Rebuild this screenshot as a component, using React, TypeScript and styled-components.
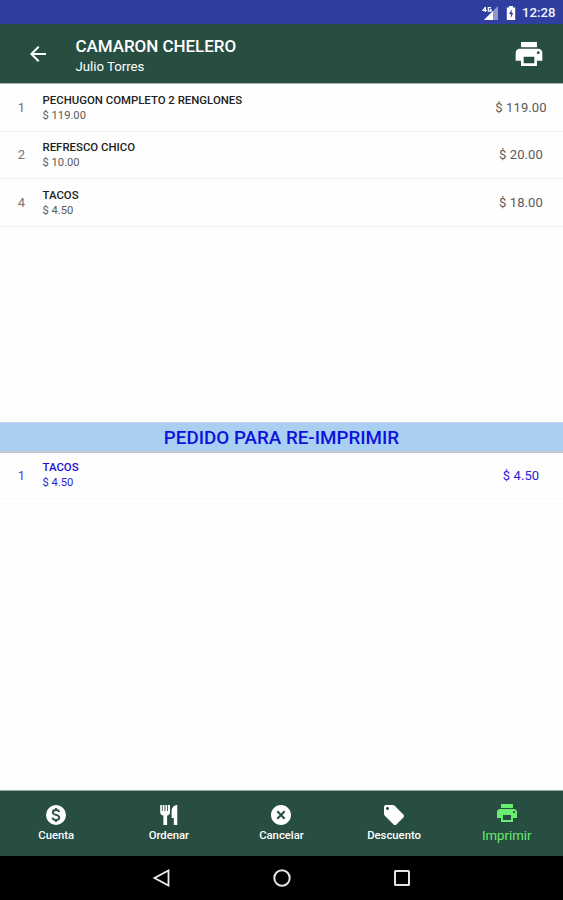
import React from 'react';
import styled, { createGlobalStyle } from 'styled-components';

const Global = createGlobalStyle`
  * { box-sizing: border-box; }
  body { margin: 0; background: #fff; font-family: Roboto, sans-serif; }
`;

const Screen = styled.div`
  width: 563px;
  height: 900px;
  display: flex;
  flex-direction: column;
  overflow: hidden;
  background: #fefefe;
`;

const StatusBar = styled.div`
  flex: 0 0 24px;
  display: flex;
  align-items: center;
  justify-content: flex-end;
  padding: 2px 7px 0 0;
  background: #303f9f;
  color: #f1f3fb;
`;

const BatterySlot = styled.span`
  display: flex;
  margin-left: 7px;
`;

const Clock = styled.span`
  width: 34px;
  margin-left: 6px;
  font-size: 13.2px;
  line-height: 16px;
  font-weight: 500;
  white-space: nowrap;
`;

const Header = styled.header`
  flex: 0 0 60px;
  display: flex;
  align-items: center;
  padding: 0 18px 0 26px;
  background: #284e42;
  border-bottom: 1px solid #a3b2ac;
  color: #fff;
`;

const Titles = styled.div`
  flex: 1;
  margin-left: 25.5px;
  padding-top: 4px;
`;

const Title = styled.div`
  font-size: 17px;
  line-height: 21px;
  font-weight: 500;
  letter-spacing: -0.05px;
`;

const Subtitle = styled.div`
  font-size: 13.2px;
  line-height: 19px;
`;

const List = styled.section<{ $height: number }>`
  flex: 0 0 ${p => p.$height}px;
`;

const Row = styled.div<{ $blue?: boolean }>`
  height: ${p => (p.$blue ? 46 : 47.5)}px;
  display: grid;
  grid-template-columns: 42px 1fr 84px;
  align-items: center;
  border-bottom: 1px solid ${p => (p.$blue ? '#f7f7f8' : '#efefef')};
  color: ${p => (p.$blue ? '#2a20d8' : '#5a5a5a')};
`;

const Quantity = styled.span`
  padding-left: 1px;
  text-align: center;
  font-size: 13px;
  opacity: 0.85;
`;

const Details = styled.div<{ $blue?: boolean }>`
  padding: ${p => (p.$blue ? 0 : 2)}px 0 0 0.5px;
`;

const ItemName = styled.div<{ $blue?: boolean }>`
  font-size: 11.4px;
  line-height: 15px;
  font-weight: 500;
  color: ${p => (p.$blue ? '#1c12d6' : '#222')};
`;

const UnitPrice = styled.div`
  font-size: 11.2px;
  line-height: 16px;
`;

const Amount = styled.span`
  text-align: center;
  font-size: 13px;
  letter-spacing: 0.1px;
`;

const Banner = styled.h2`
  flex: 0 0 31px;
  margin: 0;
  padding-top: 2px;
  border-top: 1px solid #c3d7ea;
  border-bottom: 2px solid #c5c9d2;
  background: #a9cff3;
  color: #0c13dc;
  text-align: center;
  font-size: 18.8px;
  line-height: 26px;
  font-weight: 500;
`;

const Tabs = styled.nav`
  flex: 0 0 66px;
  display: grid;
  grid-template-columns: repeat(5, 1fr);
  background: #284e42;
  border-top: 1px solid #93a59f;
`;

const Tab = styled.div<{ $active?: boolean }>`
  display: flex;
  flex-direction: column;
  align-items: center;
  padding-top: ${p => (p.$active ? 10 : 12)}px;
  color: ${p => (p.$active ? '#68ed71' : '#fff')};
  font-size: ${p => (p.$active ? 13.2 : 11.3)}px;
  line-height: ${p => (p.$active ? 21 : 18)}px;
  font-weight: ${p => (p.$active ? 400 : 500)};
`;

const SystemNav = styled.div`
  flex: 0 0 45px;
  display: flex;
  justify-content: center;
  align-items: center;
  gap: 96px;
  padding-bottom: 2px;
  background: #000;
`;

const PRINT =
  'M19 8H5c-1.66 0-3 1.34-3 3v6h4v4h12v-4h4v-6c0-1.66-1.34-3-3-3zm-3 11H8v-5h8v5zm3-7c-.55 0-1-.45-1-1s.45-1 1-1 1 .45 1 1-.45 1-1 1zm-1-9H6v4h12V3z';
const BACK = 'M20 11H7.83l5.59-5.59L12 4l-8 8 8 8 1.41-1.41L7.83 13H20v-2z';
const CANCEL =
  'M12 2C6.47 2 2 6.47 2 12s4.47 10 10 10 10-4.47 10-10S17.53 2 12 2zm4.4 13L15 16.4 12 13.4 9 16.4 7.6 15 10.6 12 7.6 9 9 7.6 12 10.6 15 7.6 16.4 9 13.4 12z';
const TAG =
  'M21.41 11.58l-9-9C12.05 2.22 11.55 2 11 2H4c-1.1 0-2 .9-2 2v7c0 .55.22 1.05.59 1.42l9 9c.36.36.86.58 1.41.58.55 0 1.05-.22 1.41-.59l7-7c.37-.36.59-.86.59-1.41 0-.55-.23-1.06-.59-1.42zM5.5 7C4.67 7 4 6.33 4 5.5S4.67 4 5.5 4 7 4.67 7 5.5 6.33 7 5.5 7z';
const CUTLERY =
  'M3.2 2h1.7v6h.8V2h1.8v6h.9V2h1.8v6h.8V2H13v7.2c0 1.9-1.1 3-2.9 3.4V22H6.4v-9.4C4.4 12.2 3.2 11.1 3.2 9.2zM20.3 2v20h-3.5v-7h-2.2V8.2c0-3.5 2.4-6.2 5.7-6.2z';

const Glyph = ({ d, size = 24 }: { d: string; size?: number }) => (
  <svg width={size} height={size} viewBox="0 0 24 24" fill="currentColor">
    <path d={d} />
  </svg>
);

const Coin = () => (
  <svg width="24" height="24" viewBox="0 0 24 24" fill="none">
    <circle cx="12" cy="12" r="10" fill="#fff" />
    <path
      d="M15.2 9C14.9 7.6 13.7 7 12 7c-1.9 0-3.2.9-3.2 2.4 0 3.3 6.5 1.7 6.5 5.1 0 1.6-1.3 2.5-3.3 2.5s-3.4-.8-3.5-2.5M12 5v2M12 17v2"
      stroke="#284e42"
      strokeWidth="1.8"
    />
  </svg>
);

const Signal = () => (
  <svg width="17" height="17" viewBox="0 0 17 17">
    <path d="M16 1v14H2z" fill="#8f98cb" />
    <path d="M11 6v9H2z" fill="#fff" />
    <path d="M3.4 2v5M3.4 2L1 5.3h3.7M9 2.6H6.3v3.6H9V4.7H7.8" stroke="#fff" strokeWidth="1.2" fill="none" />
  </svg>
);

const Battery = () => (
  <svg width="10" height="15" viewBox="0 0 10 15">
    <path d="M3 0h4v1.5h2.2V14H.8V1.5H3z" fill="#fff" />
    <path d="M5.7 3.5L3 8h1.8v4L7.2 7H5.7z" fill="#303f9f" />
  </svg>
);

type Item = { qty: number; name: string; unit: string; total: string };

const order: Item[] = [
  { qty: 1, name: 'PECHUGON COMPLETO 2 RENGLONES', unit: '$ 119.00', total: '$ 119.00' },
  { qty: 2, name: 'REFRESCO CHICO', unit: '$ 10.00', total: '$ 20.00' },
  { qty: 4, name: 'TACOS', unit: '$ 4.50', total: '$ 18.00' },
];
const reprint: Item[] = [{ qty: 1, name: 'TACOS', unit: '$ 4.50', total: '$ 4.50' }];

const OrderRow = ({ item, blue }: { item: Item; blue?: boolean }) => (
  <Row $blue={blue}>
    <Quantity>{item.qty}</Quantity>
    <Details $blue={blue}>
      <ItemName $blue={blue}>{item.name}</ItemName>
      <UnitPrice>{item.unit}</UnitPrice>
    </Details>
    <Amount>{item.total}</Amount>
  </Row>
);

export default function App() {
  return (
    <>
      <Global />
      <Screen>
        <StatusBar>
          <Signal />
          <BatterySlot>
            <Battery />
          </BatterySlot>
          <Clock>12:28</Clock>
        </StatusBar>
        <Header>
          <Glyph d={BACK} size={24} />
          <Titles>
            <Title>CAMARON CHELERO</Title>
            <Subtitle>Julio Torres</Subtitle>
          </Titles>
          <Glyph d={PRINT} size={32} />
        </Header>
        <List $height={338}>
          {order.map(item => (
            <OrderRow key={item.name} item={item} />
          ))}
        </List>
        <Banner>PEDIDO PARA RE-IMPRIMIR</Banner>
        <List $height={337}>
          {reprint.map(item => (
            <OrderRow key={item.name} item={item} blue />
          ))}
        </List>
        <Tabs>
          <Tab><Coin />Cuenta</Tab>
          <Tab><Glyph d={CUTLERY} />Ordenar</Tab>
          <Tab><Glyph d={CANCEL} />Cancelar</Tab>
          <Tab><Glyph d={TAG} />Descuento</Tab>
          <Tab $active><Glyph d={PRINT} />Imprimir</Tab>
        </Tabs>
        <SystemNav>
          <svg width="24" height="24" viewBox="0 0 24 24" fill="none" stroke="#eee" strokeWidth="1.8">
            <path d="M18.5 4.5v15L4.5 12z" />
          </svg>
          <svg width="24" height="24" viewBox="0 0 24 24" fill="none" stroke="#e4e4e4" strokeWidth="2">
            <circle cx="12" cy="12" r="7.7" />
          </svg>
          <svg width="24" height="24" viewBox="0 0 24 24" fill="none" stroke="#e4e4e4" strokeWidth="2">
            <rect x="5" y="5" width="14" height="14" rx=".5" />
          </svg>
        </SystemNav>
      </Screen>
    </>
  );
}
